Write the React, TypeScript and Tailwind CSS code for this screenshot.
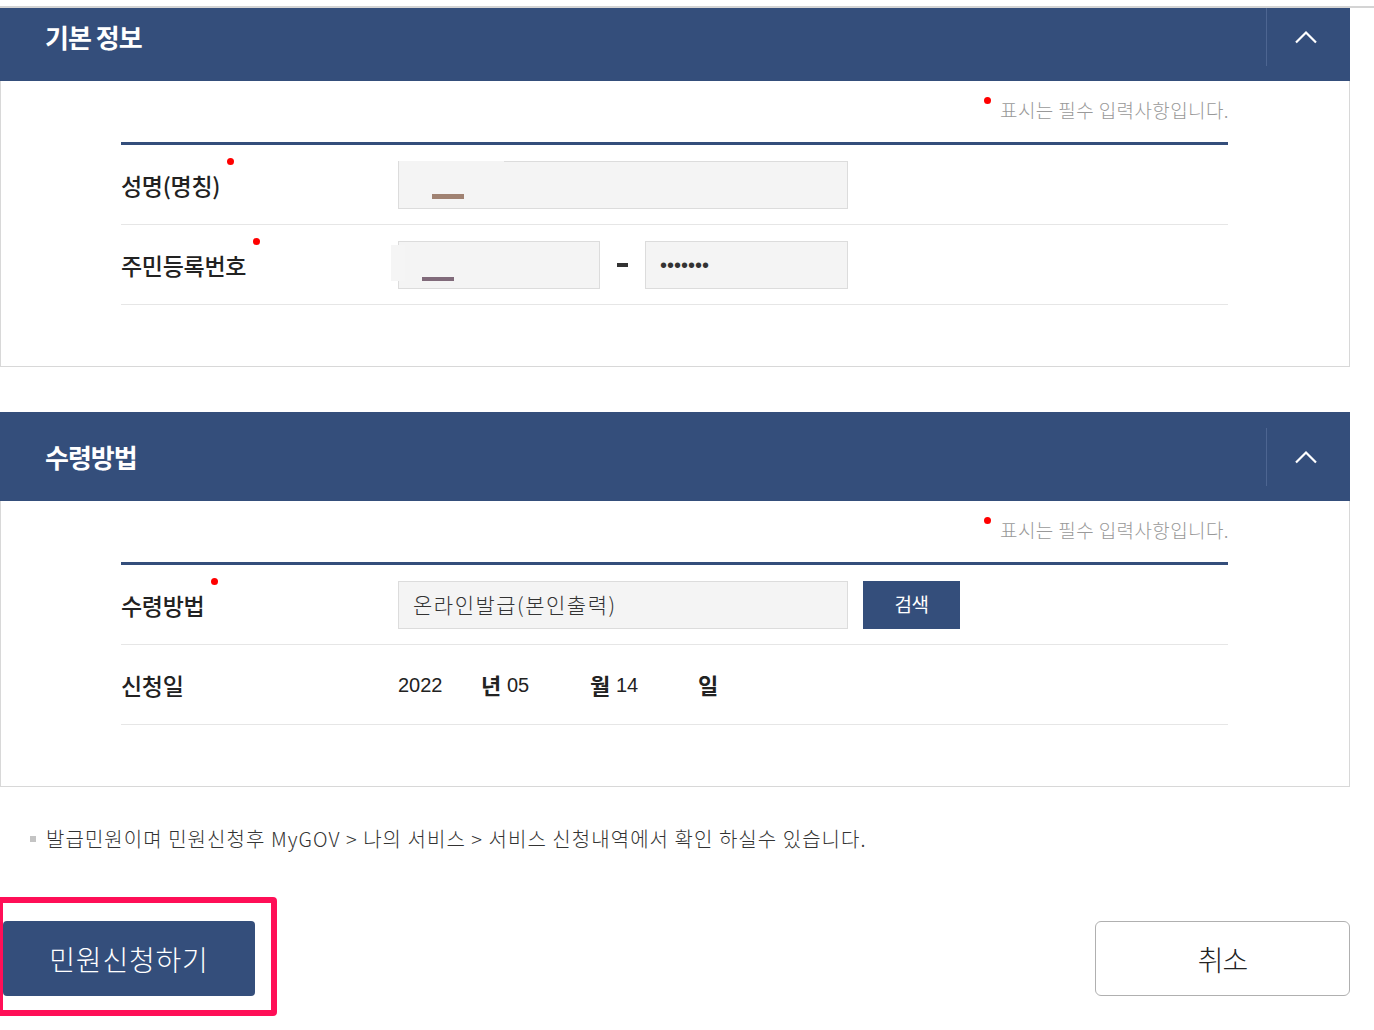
import React from "react";

const FONT = { fontFamily: '"Noto Sans CJK KR", "Noto Sans", sans-serif' };

function Chevron() {
  return (
    <svg width="24" height="14" viewBox="0 0 24 14" fill="none">
      <polyline points="2,12.5 12,2.5 22,12.5" stroke="white" strokeWidth="2.2" />
    </svg>
  );
}

function Header({ title, clipped }: { title: string; clipped?: boolean }) {
  const inner = (
    <div className="h-[89px] bg-[#344e7b] flex items-center justify-between">
      <h2 className="pl-[45px] text-white text-[26px] font-bold tracking-[-1px] leading-none">{title}</h2>
      <div className="w-[84px] h-[58px] border-l border-[#4d6591] flex items-center justify-center pr-[6px]">
        <Chevron />
      </div>
    </div>
  );
  if (clipped) {
    return (
      <div className="h-[73px] overflow-hidden">
        <div className="-mt-[16px]">{inner}</div>
      </div>
    );
  }
  return inner;
}

function Required() {
  return (
    <div className="flex justify-end pt-[16px] pr-[120px]">
      <div className="flex items-start">
        <span className="w-[7px] h-[7px] rounded-full bg-[#f00] mr-[9px]" />
        <span className="text-[19px] leading-[26px] text-[#999] font-light tracking-[0.4px]">표시는 필수 입력사항입니다.</span>
      </div>
    </div>
  );
}

function Label({ text, req }: { text: string; req?: boolean }) {
  return (
    <div className="w-[277px] shrink-0">
      <span className="relative inline-block text-[23px] leading-[32px] font-medium text-[#222] tracking-[-0.3px]">
        {text}
        {req && <span className="absolute -right-[14px] -top-[11px] w-[7px] h-[7px] rounded-full bg-[#f00]" />}
      </span>
    </div>
  );
}

function Row({ children }: { children: React.ReactNode }) {
  return <div className="h-[80px] border-b border-[#e6e6e6] flex items-center">{children}</div>;
}

function Body({ children }: { children: React.ReactNode }) {
  return (
    <div className="border border-t-0 border-[#d8d8d8] pb-[61px]">
      <Required />
      <div className="ml-[120px] w-[1107px] mt-[19px] border-t-[3px] border-[#344e7b]">{children}</div>
    </div>
  );
}

export default function App() {
  return (
    <div className="w-[1374px] min-h-[1030px] bg-white" style={FONT}>
      <div className="h-[6px]" />
      <div className="h-[2px] bg-[#d4d4d4]" />
      <div className="w-[1350px]">
        {/* 기본 정보 */}
        <Header title="기본 정보" clipped />
        <Body>
          <Row>
            <Label text="성명(명칭)" req />
            <div className="relative w-[450px] h-[48px] bg-[#f4f4f4] border border-[#dcdcdc]">
              <span className="absolute -top-px left-0 w-[105px] h-[3px] bg-[#f4f4f4]" />
              <span className="absolute left-[33px] top-[32px] w-[32px] h-[5px] bg-[#a08272]" />
            </div>
          </Row>
          <Row>
            <Label text="주민등록번호" req />
            <div className="relative w-[202px] h-[48px] bg-[#f4f4f4] border border-[#dcdcdc]">
              <span className="absolute -left-[8px] top-[3px] w-[14px] h-[36px] bg-[#f5f5f5]" />
              <span className="absolute left-[23px] top-[35px] w-[32px] h-[4px] bg-[#806a7a]" />
            </div>
            <div className="w-[45px] flex justify-center">
              <span className="w-[11px] h-[4px] bg-[#333]" />
            </div>
            <div className="w-[203px] h-[48px] bg-[#f4f4f4] border border-[#dcdcdc] flex items-center pl-[14px]">
              <span className="text-[20px] leading-none text-[#333]" style={{ fontFamily: '"Liberation Sans", sans-serif' }}>
                •••••••
              </span>
            </div>
          </Row>
        </Body>

        {/* 수령방법 */}
        <div className="mt-[45px]">
          <Header title="수령방법" />
          <Body>
            <Row>
              <Label text="수령방법" req />
              <div className="w-[450px] h-[48px] bg-[#f4f4f4] border border-[#dcdcdc] flex items-center pl-[14px]">
                <span className="text-[21px] text-[#333] tracking-[1.5px] font-light">온라인발급(본인출력)</span>
              </div>
              <button className="ml-[15px] w-[97px] h-[48px] bg-[#344e7b] text-white text-[19px] tracking-[-0.5px]">검색</button>
            </Row>
            <Row>
              <Label text="신청일" />
              <div className="flex items-center text-[#222]">
                <span className="w-[83px] text-[20px]" style={{ fontFamily: '"Liberation Sans", sans-serif' }}>2022</span>
                <span className="w-[26px] text-[22px] font-bold">년</span>
                <span className="w-[83px] text-[20px]" style={{ fontFamily: '"Liberation Sans", sans-serif' }}>05</span>
                <span className="w-[26px] text-[22px] font-bold">월</span>
                <span className="w-[82px] text-[20px]" style={{ fontFamily: '"Liberation Sans", sans-serif' }}>14</span>
                <span className="text-[22px] font-bold">일</span>
              </div>
            </Row>
          </Body>
        </div>

        {/* 안내 */}
        <div className="mt-[37px] pl-[30px] flex items-center">
          <span className="w-[6px] h-[6px] bg-[#c4c4c4] mr-[10px]" />
          <p className="text-[20px] leading-[30px] text-[#333] font-light tracking-[1.05px]">
            발급민원이며 민원신청후 MyGOV &gt; 나의 서비스 &gt; 서비스 신청내역에서 확인 하실수 있습니다.
          </p>
        </div>

        {/* 버튼 */}
        <div className="mt-[67px] flex justify-between items-center">
          <div className="relative ml-[3px]">
            <button className="w-[252px] h-[75px] rounded-[4px] bg-[#344e7b] text-white text-[28px] tracking-[0.8px] font-light">
              민원신청하기
            </button>
            <span className="absolute -left-[6px] -top-[24px] w-[280px] h-[119px] border-[6px] border-[#ff0f57] rounded-[4px]" />
          </div>
          <button className="w-[255px] h-[75px] rounded-[6px] border border-[#b0b0b0] bg-white text-[#222] text-[28px] tracking-[-1px] font-light">
            취소
          </button>
        </div>
      </div>
    </div>
  );
}
